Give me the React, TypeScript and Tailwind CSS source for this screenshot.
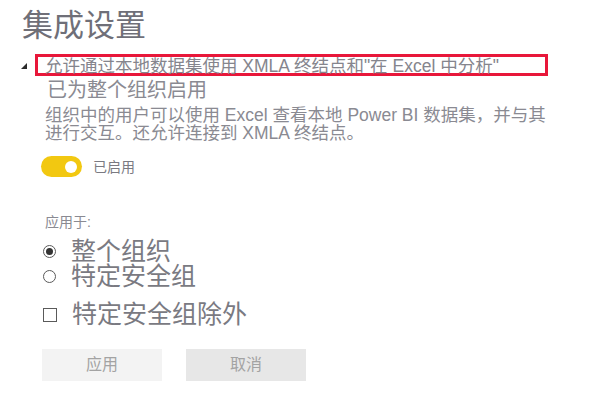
import React from "react";

const font = { fontFamily: '"Liberation Sans", "Noto Sans CJK SC", sans-serif' };

export default function App() {
  return (
    <div className="h-[403px] w-[610px] overflow-hidden bg-white" style={font}>
      <h1 className="ml-[22px] pt-[9px] text-[31px] leading-[34px] font-normal text-[#6f6f78]">集成设置</h1>

      <div className="mt-[11px] flex items-center">
        <svg width="6" height="6" viewBox="0 0 6 6" className="ml-[21px] mt-[2px]">
          <polygon points="6,0 6,6 0,6" fill="#2b2b2b" />
        </svg>
        <div className="ml-[8px] h-[22px] w-[513px] border-[3px] border-[#e8173a] pl-[7px] text-[17.5px] leading-[19px] whitespace-nowrap text-[#85858d]">
          允许通过本地数据集使用 XMLA 终结点和"在 Excel 中分析"
        </div>
      </div>

      <div className="ml-[47px] mt-[2px] text-[20px] leading-[24px] text-[#8a8a92]">已为整个组织启用</div>

      <p className="ml-[45px] mt-[4px] text-[17.5px] leading-[18px] text-[#8a8a92]">
        组织中的用户可以使用 Excel 查看本地 Power BI 数据集，并与其
        <br />
        进行交互。还允许连接到 XMLA 终结点。
      </p>

      <div className="ml-[41px] mt-[14px] flex items-center gap-[11px]">
        <div className="flex h-[21px] w-[41px] items-center justify-end rounded-full bg-[#f2c811] pr-[5px]">
          <div className="h-[12px] w-[12px] rounded-full bg-white" />
        </div>
        <span className="text-[14px] leading-[20px] text-[#7a7a82]">已启用</span>
      </div>

      <div className="ml-[45px] mt-[36px] text-[14px] leading-[18px] text-[#8a8a92]">应用于:</div>

      <div className="ml-[43px] mt-[8px] flex flex-col text-[#7a7a82]">
        <label className="flex items-center gap-[15px]">
          <span className="flex h-[13px] w-[13px] items-center justify-center rounded-full border border-[#5a5a5a]">
            <span className="h-[7px] w-[7px] rounded-full bg-[#333]" />
          </span>
          <span className="text-[25px] leading-[25px]">整个组织</span>
        </label>
        <label className="flex items-center gap-[15px]">
          <span className="h-[13px] w-[13px] rounded-full border border-[#5a5a5a]" />
          <span className="text-[25px] leading-[25px]">特定安全组</span>
        </label>
        <label className="mt-[13px] flex items-center gap-[15px]">
          <span className="h-[14px] w-[14px] border border-[#5a5a5a]" />
          <span className="text-[25px] leading-[25px]">特定安全组除外</span>
        </label>
      </div>

      <div className="ml-[42px] mt-[22px] flex gap-[24px]">
        <button className="h-[32px] w-[120px] bg-[#f3f3f3] text-[16px] text-[#a3a3a3]">应用</button>
        <button className="h-[32px] w-[120px] bg-[#e7e7e7] text-[16px] text-[#a3a3a3]">取消</button>
      </div>
    </div>
  );
}
